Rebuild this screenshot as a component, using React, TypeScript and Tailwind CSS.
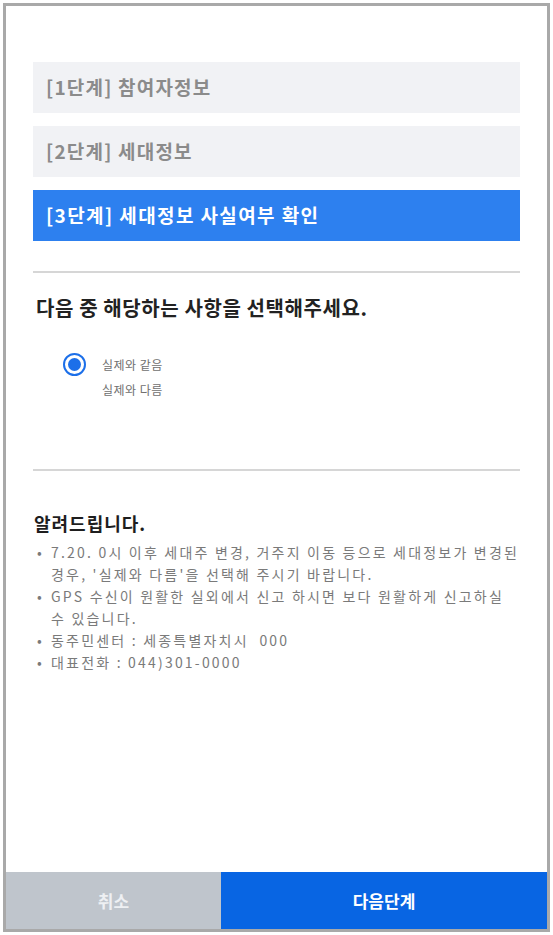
import { useState } from "react";

const steps = [
  { label: "[1단계] 참여자정보", active: false },
  { label: "[2단계] 세대정보", active: false },
  { label: "[3단계] 세대정보 사실여부 확인", active: true },
];

const notices = [
  ["7.20. 0시 이후 세대주 변경, 거주지 이동 등으로 세대정보가 변경된", "경우, '실제와 다름'을 선택해 주시기 바랍니다."],
  ["GPS 수신이 원활한 실외에서 신고 하시면 보다 원활하게 신고하실", "수 있습니다."],
  ["동주민센터 : 세종특별자치시  000"],
  ["대표전화 : 044)301-0000"],
];

export default function App() {
  const [choice, setChoice] = useState("same");

  return (
    <div
      className="w-[553px] h-[935px] p-[3px] bg-white"
      style={{ fontFamily: '"Noto Sans CJK KR", "Noto Sans", sans-serif' }}
    >
      <div className="h-full border-[3px] border-[#a9a9a9] flex flex-col">
        <div className="flex-1 px-[27px] pt-[56px]">
          <div className="flex flex-col gap-[13px]">
            {steps.map((s) => (
              <div
                key={s.label}
                className={
                  s.active
                    ? "h-[51px] flex items-center pl-[13px] bg-[#2d80ef] text-white text-[19px] tracking-[1.4px] font-bold"
                    : "h-[51px] flex items-center pl-[13px] bg-[#f1f2f5] text-[#8b8b8b] text-[19px] tracking-[1.2px] font-semibold"
                }
              >
                {s.label}
              </div>
            ))}
          </div>

          <div className="mt-[30px] h-[2px] bg-[#d6d6d6]" />

          <h2 className="mt-[21px] pl-[3px] text-[20px] leading-[28px] tracking-[0.6px] font-bold text-[#222]">
            다음 중 해당하는 사항을 선택해주세요.
          </h2>

          <div className="mt-[30px] pl-[30px] flex flex-col">
            <button
              type="button"
              onClick={() => setChoice("same")}
              className="h-[25px] flex items-center text-left"
            >
              <span className="w-[23px] h-[23px] rounded-full border-2 border-[#1c6fe9] flex items-center justify-center">
                {choice === "same" && <span className="w-[13px] h-[13px] rounded-full bg-[#1c6fe9]" />}
              </span>
              <span className="ml-[16px] text-[12px] text-[#6f6f6f] tracking-[0.5px]">실제와 같음</span>
            </button>
            <button
              type="button"
              onClick={() => setChoice("diff")}
              className="h-[25px] flex items-center text-left pl-[39px]"
            >
              <span className="text-[12px] text-[#6f6f6f] tracking-[0.5px]">실제와 다름</span>
            </button>
          </div>

          <div className="mt-[67px] h-[2px] bg-[#d6d6d6]" />

          <h3 className="mt-[39px] pl-[1px] text-[18px] leading-[26px] tracking-[1px] font-bold text-[#1e1e1e]">
            알려드립니다.
          </h3>

          <ul className="mt-[5px] flex flex-col">
            {notices.map((lines, i) => (
              <li key={i} className="flex text-[14px] leading-[22px] text-[#7a7a7a] tracking-[2.2px]">
                <span className="w-[18px] pl-[4px] shrink-0">•</span>
                <span className="whitespace-pre">
                  {lines.map((l, j) => (
                    <span key={j} className="block">
                      {l}
                    </span>
                  ))}
                </span>
              </li>
            ))}
          </ul>
        </div>

        <div className="h-[57px] flex">
          <button type="button" className="w-[215px] bg-[#bfc5cc] text-[#eef0f3] text-[17px] font-bold">
            취소
          </button>
          <button type="button" className="flex-1 bg-[#0865e3] text-white text-[17px] font-bold">
            다음단계
          </button>
        </div>
      </div>
    </div>
  );
}
